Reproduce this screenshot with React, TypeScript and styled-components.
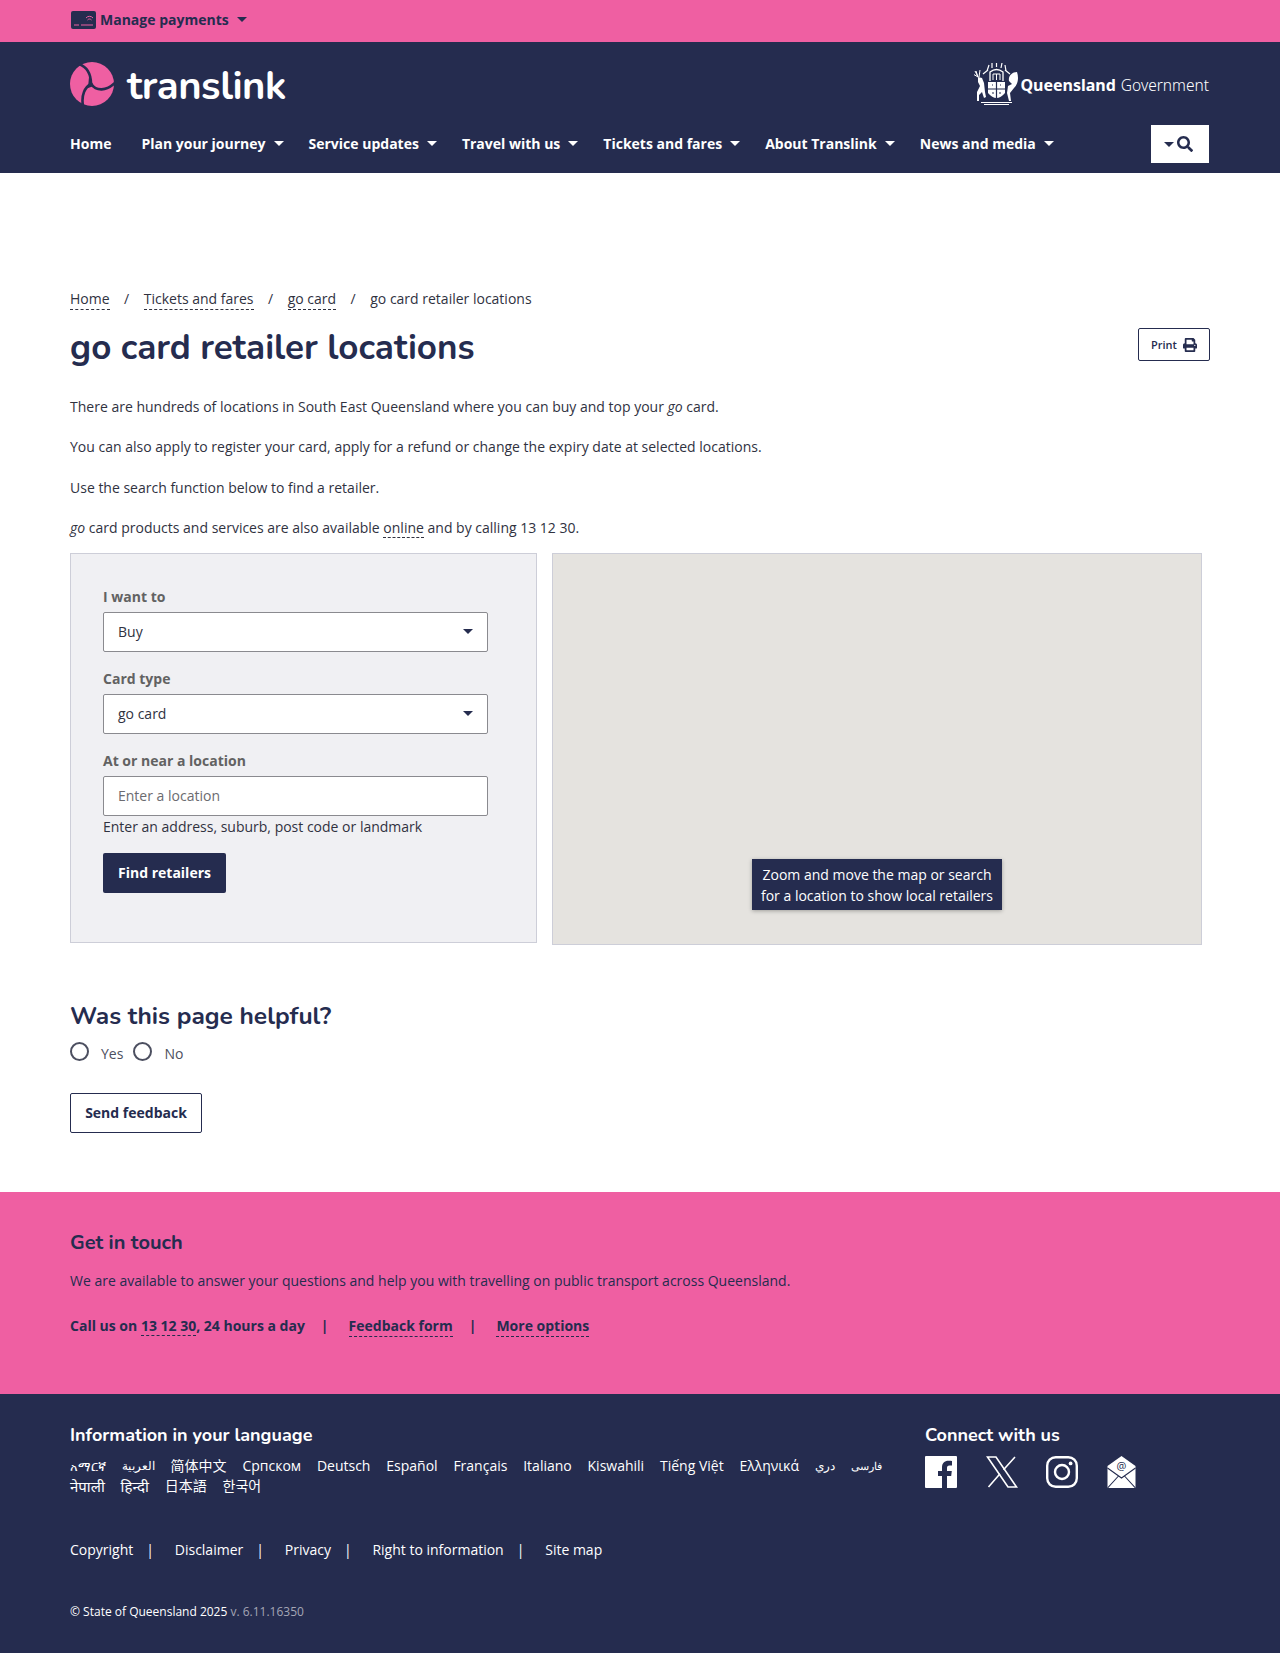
import React from "react";
import styled, { createGlobalStyle } from "styled-components";
import { FaSearch, FaPrint } from "react-icons/fa";

const navy = "#252c4f";
const pink = "#ef5fa2";
const headingFont = `Nunito, Lato, "Open Sans", sans-serif`;

const GlobalStyle = createGlobalStyle`
  body {
    margin: 0;
    background: #fff;
    font-family: "Open Sans", "Noto Sans", "Noto Sans CJK SC", sans-serif;
    font-size: 14px;
    color: #30323f;
  }
  * { box-sizing: border-box; }
`;

const Caret = styled.span<{ $color?: string }>`
  display: inline-block;
  width: 0;
  height: 0;
  border-left: 5px solid transparent;
  border-right: 5px solid transparent;
  border-top: 5px solid ${(p) => p.$color || "#fff"};
`;

const TopBar = styled.div`
  height: 42px;
  background: ${pink};
  padding: 0 71px 3px;
  display: flex;
  align-items: center;
  gap: 4px;
  color: ${navy};
  font-weight: 700;
  font-size: 14px;
`;

const TopLabel = styled.span`
  margin-right: 4px;
`;

const Header = styled.header`
  height: 131px;
  background: ${navy};
  padding: 20px 70px 0;
`;

const BrandRow = styled.div`
  display: flex;
  justify-content: space-between;
  align-items: center;
  height: 44px;
`;

const Brand = styled.div`
  display: flex;
  align-items: center;
  gap: 13px;
`;

const Wordmark = styled.span`
  font-family: ${headingFont};
  font-weight: 700;
  font-size: 40px;
  letter-spacing: -0.5px;
  line-height: 44px;
  padding-top: 4px;
  color: #fff;
`;

const GovLogo = styled.div`
  display: flex;
  align-items: center;
  gap: 2px;
  margin: 1px 1px 0 0;
  color: #fff;
  font-family: "Noto Sans", sans-serif;
  font-size: 16px;
`;

const GovStrong = styled.strong`
  font-weight: 700;
`;

const GovLight = styled.span`
  font-weight: 300;
  margin-left: 3px;
  font-size: 15.5px;
`;

const NavRow = styled.nav`
  display: flex;
  align-items: center;
  justify-content: space-between;
  margin-top: 19px;
  height: 38px;
`;

const NavList = styled.div`
  display: flex;
  align-items: center;
  gap: 25px;
  padding-bottom: 2px;
`;

const NavItem = styled.a<{ $first?: boolean }>`
  display: flex;
  align-items: center;
  gap: 8px;
  margin-right: ${(p) => (p.$first ? "5px" : "0")};
  color: #fff;
  font-weight: 700;
  font-size: 14px;
`;

const SearchToggle = styled.button`
  width: 58px;
  height: 38px;
  margin-right: 1px;
  padding: 0 4px 0 0;
  background: #fff;
  border: 0;
  display: flex;
  align-items: center;
  justify-content: center;
  gap: 3px;
  color: ${navy};
  font-size: 16px;
`;

const Main = styled.main`
  padding: 116px 70px 0;
`;

const Breadcrumbs = styled.div`
  display: flex;
  align-items: flex-start;
  gap: 14.5px;
  line-height: 20px;
`;

const DashLink = styled.a`
  color: inherit;
  border-bottom: 1px dashed currentColor;
`;

const TitleRow = styled.div`
  display: flex;
  justify-content: space-between;
  align-items: flex-start;
  margin-top: 17px;
`;

const Title = styled.h1`
  margin: 0;
  font-family: ${headingFont};
  font-weight: 700;
  font-size: 35px;
  line-height: 42px;
  color: ${navy};
`;

const PrintButton = styled.button`
  width: 72px;
  height: 33px;
  margin-top: 1px;
  background: #fff;
  border: 1px solid ${navy};
  border-radius: 2px;
  display: flex;
  align-items: center;
  justify-content: center;
  gap: 6px;
  font-family: "Open Sans", sans-serif;
  font-weight: 600;
  font-size: 11px;
  color: ${navy};
`;

const Para = styled.p`
  margin: 0 0 20.5px;
  line-height: 20px;
`;

const Intro = styled.div`
  margin-top: 27.5px;
`;

const FinderRow = styled.div`
  display: flex;
  gap: 15px;
  align-items: flex-start;
  margin-top: -5.5px;
`;

const FormPanel = styled.form`
  width: 467px;
  height: 390px;
  background: #f0f0f3;
  border: 1px solid #cdced8;
  padding: 33px 32px;
`;

const FieldLabel = styled.label`
  display: block;
  font-weight: 700;
  font-size: 14px;
  line-height: 20px;
  color: #626262;
  margin-bottom: 5px;
`;

const Field = styled.div`
  margin-bottom: 17px;
`;

const Control = styled.div<{ $muted?: boolean }>`
  width: 385px;
  height: 40px;
  background: #fff;
  border: 1px solid #8a8a8f;
  border-radius: 2px;
  padding: 0 14px 2px;
  display: flex;
  align-items: center;
  justify-content: space-between;
  color: ${(p) => (p.$muted ? "#6b6b70" : "#30323f")};
`;

const Help = styled.div`
  line-height: 20px;
  margin: 1px 0 16px;
`;

const FindButton = styled.button`
  height: 40px;
  width: 123px;
  padding: 0 0 2px;
  background: ${navy};
  border: 0;
  border-radius: 2px;
  color: #fff;
  font-family: "Open Sans", sans-serif;
  font-weight: 700;
  font-size: 14px;
`;

const MapPanel = styled.div`
  position: relative;
  width: 650px;
  height: 392px;
  background: #e5e3df;
  border: 1px solid #cdced8;
`;

const MapTip = styled.div`
  position: absolute;
  left: 199px;
  top: 305px;
  width: 250px;
  padding: 5px 0 4px;
  background: ${navy};
  color: #fff;
  text-align: center;
  line-height: 21px;
  box-shadow: 0 1px 4px rgba(0, 0, 0, 0.3);
`;

const Feedback = styled.section`
  margin-top: 55px;
`;

const SubHeading = styled.h2`
  margin: 0;
  font-family: ${headingFont};
  font-weight: 700;
  font-size: 24.5px;
  line-height: 32px;
  color: ${navy};
`;

const RadioRow = styled.div`
  display: flex;
  align-items: center;
  margin-top: 9px;
  height: 24px;
`;

const Radio = styled.span`
  width: 19px;
  height: 19px;
  border: 2px solid #4c4f60;
  border-radius: 50%;
  margin-top: -4px;
`;

const RadioText = styled.span`
  margin: 0 10px 0 12px;
  color: #4c4f60;
`;

const SendButton = styled.button`
  display: block;
  margin-top: 28px;
  width: 132px;
  height: 40px;
  padding: 0 0 2px;
  background: #fff;
  border: 1px solid ${navy};
  border-radius: 2px;
  font-family: "Open Sans", sans-serif;
  font-weight: 700;
  font-size: 14px;
  color: ${navy};
`;

const Touch = styled.section`
  margin-top: 59px;
  height: 202px;
  background: ${pink};
  padding: 37px 70px 0;
  color: ${navy};
`;

const TouchHeading = styled.h3`
  margin: 0;
  font-family: ${headingFont};
  font-weight: 700;
  font-size: 20px;
  line-height: 28px;
  color: ${navy};
`;

const TouchText = styled.p`
  margin: 14px 0 0;
  line-height: 20px;
`;

const TouchLinks = styled.div`
  display: flex;
  align-items: flex-start;
  gap: 18px;
  margin-top: 25px;
  font-weight: 700;
  line-height: 20px;
`;

const Pipe = styled.span`
  margin: 0 2px 0 -2px;
`;

const Footer = styled.footer`
  height: 259px;
  background: ${navy};
  padding: 29px 70px 0;
  color: #fff;
`;

const FooterTop = styled.div`
  display: flex;
  justify-content: space-between;
`;

const LangColumn = styled.div`
  width: 820px;
`;

const FooterHeading = styled.h4`
  margin: 0 0 9px;
  font-family: ${headingFont};
  font-weight: 700;
  font-size: 18px;
  line-height: 24px;
`;

const LangList = styled.div`
  display: flex;
  flex-wrap: wrap;
  column-gap: 15.8px;
`;

const LangItem = styled.span<{ $size?: number }>`
  height: 20px;
  line-height: 20px;
  font-size: ${(p) => p.$size || 14}px;
`;

const SocialColumn = styled.div`
  width: 285px;
`;

const SocialRow = styled.div`
  display: flex;
  align-items: center;
  gap: 28.7px;
`;

const LegalRow = styled.div`
  display: flex;
  align-items: center;
  margin-top: 44px;
  line-height: 20px;
`;

const LegalItem = styled.a`
  color: #fff;
  &:not(:last-child)::after {
    content: "|";
    margin: 0 20.8px 0 13px;
  }
`;

const Copyright = styled.div`
  margin-top: 43px;
  font-size: 12px;
  line-height: 18px;
`;

const Version = styled.span`
  color: #a4a6b5;
`;

function TranslinkMark() {
  return (
    <svg width="44" height="44" viewBox="0 0 44 44">
      <circle cx="22" cy="22" r="22" fill={pink} />
      <g fill="none" stroke={navy} strokeWidth="2.6" strokeLinecap="round">
        <path d="M9 2 C17 5 21 12 21 22" />
        <path d="M21 22 C26 29 36 30 46 20" />
        <path d="M21 22 C15 25 11 33 13 44" />
      </g>
      <path d="M19 15 L24 24 L18 26 Z" fill={navy} />
    </svg>
  );
}

// rough line drawing of the state crest
function Crest() {
  return (
    <svg width="44" height="44" viewBox="4 4 44 44" fill="#fff">
      <path d="M8 18 L12 19 L14 24 L15 33 L16 38 L14 39 L12 33 L9 36 L9 42 L7 42 L7 33 L10 27 L8 23 Z" />
      <path d="M5 12 L8 18 L6 12 M10 11 L9 18 M3 15 L8 18" stroke="#fff" strokeWidth="1" fill="none" />
      <path d="M47 13 C42 13 38 17 39 22 L42 25 L38 27 L37 34 L39 42 L41 42 L40 34 L44 29 C48 25 49 19 47 13 Z" />
      <path d="M18 23 H35 V34 Q26.5 44 18 34 Z" />
      <path d="M26.5 23 V40 M18 30 H35 M22 26 H23 M30 26 H31 M22 34 H24 M29 34 H31" stroke={navy} strokeWidth="1.2" fill="none" />
      <path d="M20 22 V13 Q26.5 8 33 13 V22" fill="none" stroke="#fff" strokeWidth="1.3" />
      <path d="M23 21 V15 H30 V21 M26.5 15 V21" fill="none" stroke="#fff" strokeWidth="1" />
      <path d="M17 12 L19 6 M22 9 L22 4 M26.5 8 V3 M31 9 L32 4 M36 12 L35 6 M13 15 L18 11 M40 15 L35 11" stroke="#fff" strokeWidth="1.2" fill="none" />
      <rect x="11" y="43" width="31" height="1" />
      <rect x="14" y="45" width="25" height="1" />
    </svg>
  );
}

function CardIcon() {
  return (
    <svg width="25" height="18" viewBox="0 0 25 18">
      <rect width="25" height="18" rx="2" fill={navy} />
      <path d="M3 14 H8 M10 14 H22" stroke={pink} strokeWidth="1" />
      <path d="M15 7 a4.5 4.5 0 0 1 7 0 M16.5 9 a2.5 2.5 0 0 1 4 0" stroke={pink} strokeWidth="1" fill="none" />
    </svg>
  );
}

function FacebookIcon() {
  return (
    <svg width="32" height="32" viewBox="0 0 32 32">
      <path
        fill="#fff"
        fillRule="evenodd"
        d="M1 0 H31 a1 1 0 0 1 1 1 V31 a1 1 0 0 1 -1 1 H22 V20 H26.2 L26.8 15 H22 V12 C22 10.5 22.5 9.5 24.5 9.5 H27 V5 C26 4.9 25 4.8 23.5 4.8 C19.5 4.8 17 7.2 17 11.5 V15 H13 V20 H17 V32 H1 a1 1 0 0 1 -1 -1 V1 a1 1 0 0 1 1 -1 Z"
      />
    </svg>
  );
}

function XIcon() {
  return (
    <svg width="32" height="32" viewBox="0 0 32 32" fill="none" stroke="#fff" strokeWidth="1.6">
      <path d="M1.5 1 H10 L30.5 31 H22 Z" />
      <path d="M29 1 L17.5 13.8 M14 17.8 L2.5 31" />
    </svg>
  );
}

function InstagramIcon() {
  return (
    <svg width="32" height="32" viewBox="0 0 32 32" fill="none" stroke="#fff" strokeWidth="2.4">
      <rect x="1.2" y="1.2" width="29.6" height="29.6" rx="8.5" />
      <circle cx="16" cy="16" r="7" />
      <circle cx="24.6" cy="7.4" r="1.9" fill="#fff" stroke="none" />
    </svg>
  );
}

function MailIcon() {
  return (
    <svg width="29" height="32" viewBox="0 0 29 32" fill="#fff">
      <path d="M14.5 0 L28.5 10 V32 H0.5 V10 Z" />
      <path d="M0.5 12 L14.5 22 L28.5 12 M0.5 32 L11.5 20 M28.5 32 L17.5 20" stroke={navy} strokeWidth="1.1" fill="none" />
      <text x="14.5" y="14" fontSize="11" fontFamily="Open Sans, sans-serif" textAnchor="middle" fill={navy}>
        @
      </text>
    </svg>
  );
}

const navItems = ["Plan your journey", "Service updates", "Travel with us", "Tickets and fares", "About Translink", "News and media"];
const languages: { name: string; size?: number }[] = [
  { name: "አማርኛ", size: 13 },
  { name: "العربية", size: 12 },
  { name: "简体中文" },
  { name: "Српском" },
  { name: "Deutsch" },
  { name: "Español" },
  { name: "Français" },
  { name: "Italiano" },
  { name: "Kiswahili" },
  { name: "Tiếng Việt" },
  { name: "Ελληνικά" },
  { name: "دري", size: 12 },
  { name: "فارسی", size: 11 },
  { name: "नेपाली", size: 15 },
  { name: "हिन्दी", size: 15 },
  { name: "日本語" },
  { name: "한국어" },
];
const legal = ["Copyright", "Disclaimer", "Privacy", "Right to information", "Site map"];

export default function App() {
  return (
    <>
      <GlobalStyle />
      <TopBar>
        <CardIcon />
        <TopLabel>Manage payments</TopLabel>
        <Caret $color={navy} />
      </TopBar>
      <Header>
        <BrandRow>
          <Brand>
            <TranslinkMark />
            <Wordmark>translink</Wordmark>
          </Brand>
          <GovLogo>
            <Crest />
            <GovStrong>Queensland</GovStrong>
            <GovLight>Government</GovLight>
          </GovLogo>
        </BrandRow>
        <NavRow>
          <NavList>
            <NavItem $first>Home</NavItem>
            {navItems.map((item) => (
              <NavItem key={item}>
                {item}
                <Caret />
              </NavItem>
            ))}
          </NavList>
          <SearchToggle aria-label="Search">
            <Caret $color={navy} />
            <FaSearch />
          </SearchToggle>
        </NavRow>
      </Header>
      <Main>
        <Breadcrumbs>
          <DashLink>Home</DashLink>
          <span>/</span>
          <DashLink>Tickets and fares</DashLink>
          <span>/</span>
          <DashLink>go card</DashLink>
          <span>/</span>
          <span>go card retailer locations</span>
        </Breadcrumbs>
        <TitleRow>
          <Title>go card retailer locations</Title>
          <PrintButton>
            Print <FaPrint size={14} />
          </PrintButton>
        </TitleRow>
        <Intro>
          <Para>
            There are hundreds of locations in South East Queensland where you can buy and top your <em>go</em> card.
          </Para>
          <Para>You can also apply to register your card, apply for a refund or change the expiry date at selected locations.</Para>
          <Para>Use the search function below to find a retailer.</Para>
          <Para>
            <em>go</em> card products and services are also available <DashLink>online</DashLink> and by calling 13 12 30.
          </Para>
        </Intro>
        <FinderRow>
          <FormPanel>
            <Field>
              <FieldLabel>I want to</FieldLabel>
              <Control>
                Buy
                <Caret $color={navy} />
              </Control>
            </Field>
            <Field>
              <FieldLabel>Card type</FieldLabel>
              <Control>
                go card
                <Caret $color={navy} />
              </Control>
            </Field>
            <FieldLabel>At or near a location</FieldLabel>
            <Control $muted>Enter a location</Control>
            <Help>Enter an address, suburb, post code or landmark</Help>
            <FindButton type="button">Find retailers</FindButton>
          </FormPanel>
          <MapPanel>
            <MapTip>
              Zoom and move the map or search
              <br />
              for a location to show local retailers
            </MapTip>
          </MapPanel>
        </FinderRow>
        <Feedback>
          <SubHeading>Was this page helpful?</SubHeading>
          <RadioRow>
            <Radio />
            <RadioText>Yes</RadioText>
            <Radio />
            <RadioText>No</RadioText>
          </RadioRow>
          <SendButton>Send feedback</SendButton>
        </Feedback>
      </Main>
      <Touch>
        <TouchHeading>Get in touch</TouchHeading>
        <TouchText>We are available to answer your questions and help you with travelling on public transport across Queensland.</TouchText>
        <TouchLinks>
          <span>
            Call us on <DashLink>13 12 30</DashLink>, 24 hours a day
          </span>
          <Pipe>|</Pipe>
          <DashLink>Feedback form</DashLink>
          <Pipe>|</Pipe>
          <DashLink>More options</DashLink>
        </TouchLinks>
      </Touch>
      <Footer>
        <FooterTop>
          <LangColumn>
            <FooterHeading>Information in your language</FooterHeading>
            <LangList>
              {languages.map((l) => (
                <LangItem key={l.name} $size={l.size}>
                  {l.name}
                </LangItem>
              ))}
            </LangList>
          </LangColumn>
          <SocialColumn>
            <FooterHeading>Connect with us</FooterHeading>
            <SocialRow>
              <FacebookIcon />
              <XIcon />
              <InstagramIcon />
              <MailIcon />
            </SocialRow>
          </SocialColumn>
        </FooterTop>
        <LegalRow>
          {legal.map((l) => (
            <LegalItem key={l}>{l}</LegalItem>
          ))}
        </LegalRow>
        <Copyright>
          © State of Queensland 2025 <Version>v. 6.11.16350</Version>
        </Copyright>
      </Footer>
    </>
  );
}
